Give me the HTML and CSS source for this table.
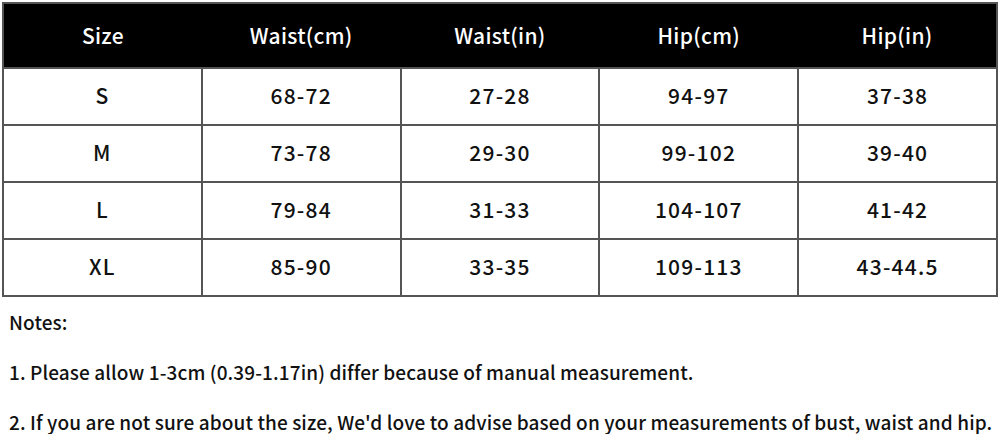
FILE: index.html
```html
<!DOCTYPE html>
<html lang="en">
<head>
    <meta charset="UTF-8">
    <meta name="viewport" content="width=device-width, initial-scale=1.0">
    <title>Size Chart</title>
    <link rel="stylesheet" href="styles.css">
</head>
<body>
    <div class="chart">
        <table class="size-table">
            <thead>
                <tr>
                    <th>Size</th>
                    <th>Waist(cm)</th>
                    <th>Waist(in)</th>
                    <th>Hip(cm)</th>
                    <th>Hip(in)</th>
                </tr>
            </thead>
            <tbody>
                <tr><td>S</td><td>68-72</td><td>27-28</td><td>94-97</td><td>37-38</td></tr>
                <tr><td>M</td><td>73-78</td><td>29-30</td><td>99-102</td><td>39-40</td></tr>
                <tr><td>L</td><td>79-84</td><td>31-33</td><td>104-107</td><td>41-42</td></tr>
                <tr><td>XL</td><td>85-90</td><td>33-35</td><td>109-113</td><td>43-44.5</td></tr>
            </tbody>
        </table>
        <div class="notes">
            <p>Notes:</p>
            <p>1. Please allow 1-3cm (0.39-1.17in) differ because of manual measurement.</p>
            <p>2. If you are not sure about the size, We'd love to advise based on your measurements of bust, waist and hip.</p>
        </div>
    </div>
</body>
</html>
```

FILE: styles.css
```css
body {
    margin: 0;
    padding: 0;
    background-color: #fff;
    font-family: "Noto Sans CJK SC", "Noto Sans", sans-serif;
    color: #111;
}
.chart {
    padding: 2px 2px 0 2px;
}
.size-table {
    width: 996px;
    border-collapse: collapse;
    table-layout: fixed;
    border: 2px solid #555;
}
.size-table th {
    height: 61px;
    padding: 0 0 2px 0;
    background-color: #000;
    color: #fff;
    font-size: 21px;
    font-weight: 500;
    letter-spacing: 0.3px;
    text-align: center;
}
.size-table td {
    height: 52px;
    padding: 0 0 3px 0;
    border: 2px solid #555;
    font-size: 21px;
    font-weight: 500;
    letter-spacing: 1.2px;
    text-align: center;
}
.notes {
    padding-left: 7px;
}
.notes p {
    margin: 0;
    height: 50px;
    line-height: 50px;
    font-size: 19px;
    font-weight: 500;
    letter-spacing: 0.1px;
}
```
